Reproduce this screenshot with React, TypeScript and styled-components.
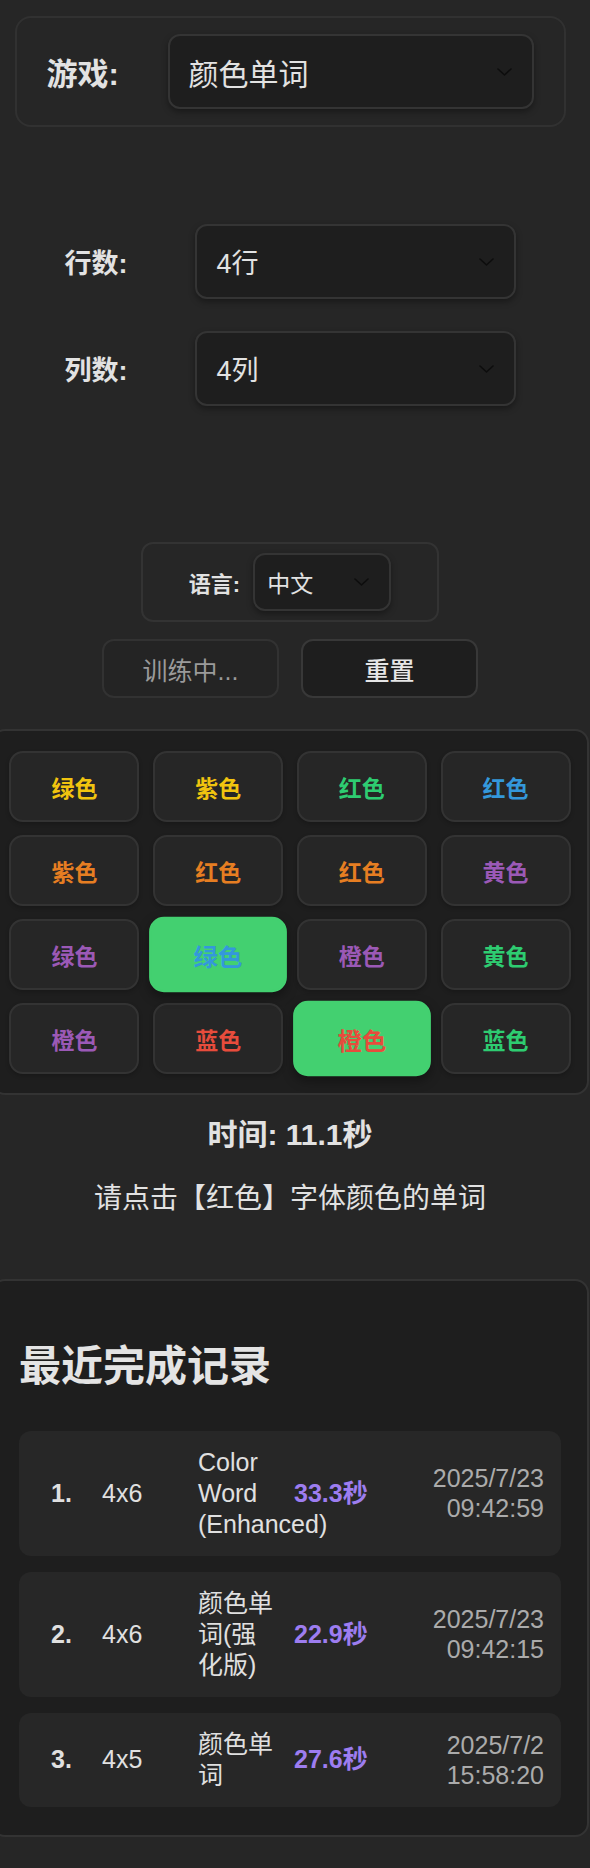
import React from "react";
import styled, { createGlobalStyle } from "styled-components";

const GlobalStyle = createGlobalStyle`
  html, body {
    margin: 0;
    padding: 0;
    background: #262626;
  }
  body {
    font-family: "Liberation Sans", "Noto Sans CJK SC", sans-serif;
    color: #e0e0e0;
    overflow-x: hidden;
  }
  * { box-sizing: border-box; }
`;

const Page = styled.div`
  width: 580px;
  display: flex;
  flex-direction: column;
  align-items: center;
  padding-top: 16px;
  padding-bottom: 31px;
`;

const GameBox = styled.div`
  width: 551px;
  display: flex;
  align-items: center;
  padding: 16px 30px;
  border: 2px solid #313131;
  border-radius: 16px;
`;

const GameLabel = styled.div`
  width: 121px;
  flex: none;
  font-size: 31px;
  font-weight: 700;
  color: #e2e2e2;
`;

const SelectBox = styled.div<{ $h: number; $w?: number; $fs: number; $pl: number; $pr: number }>`
  display: flex;
  align-items: center;
  justify-content: space-between;
  flex: ${(p) => (p.$w ? "none" : "1")};
  width: ${(p) => (p.$w ? `${p.$w}px` : "auto")};
  height: ${(p) => p.$h}px;
  padding: 0 ${(p) => p.$pr}px 0 ${(p) => p.$pl}px;
  background: #1e1e1e;
  border: 2px solid #343434;
  border-radius: 12px;
  box-shadow: 0 3px 6px rgba(0, 0, 0, 0.35);
  font-size: ${(p) => p.$fs}px;
  color: #e2e2e2;
`;

const ChevronSvg = styled.svg`
  flex: none;
  display: block;
`;

const Chevron = () => (
  <ChevronSvg width={15} height={8} viewBox="0 0 15 8">
    <polyline points="1,1 7.5,7 14,1" fill="none" stroke="#0d0d0d" strokeWidth="1.6" strokeLinecap="round" strokeLinejoin="round" />
  </ChevronSvg>
);

const SizeRow = styled.div<{ $mt: number }>`
  width: 451px;
  display: flex;
  align-items: center;
  margin-top: ${(p) => p.$mt}px;
`;

const SizeLabel = styled.div`
  width: 130px;
  flex: none;
  font-size: 27px;
  font-weight: 700;
  color: #e2e2e2;
`;

const LangBox = styled.div`
  width: 298px;
  height: 80px;
  margin-top: 136px;
  display: flex;
  align-items: center;
  justify-content: center;
  gap: 13px;
  border: 2px solid #333;
  border-radius: 12px;
`;

const LangLabel = styled.div`
  font-size: 22px;
  font-weight: 700;
  color: #e2e2e2;
`;

const ButtonRow = styled.div`
  display: flex;
  gap: 22px;
  margin-top: 17px;
`;

const ActionButton = styled.div<{ $muted?: boolean }>`
  width: 177px;
  height: 59px;
  display: flex;
  align-items: center;
  justify-content: center;
  border-radius: 12px;
  border: 2px solid ${(p) => (p.$muted ? "#323232" : "#383838")};
  background: ${(p) => (p.$muted ? "#242424" : "#1e1e1e")};
  color: ${(p) => (p.$muted ? "#9a9a9a" : "#e6e6e6")};
  font-size: 25px;
  font-weight: ${(p) => (p.$muted ? 400 : 500)};
`;

const Panel = styled.div<{ $mt: number; $pad: string }>`
  flex: none;
  margin-top: ${(p) => p.$mt}px;
  width: 598px;
  border: 2px solid #333;
  border-radius: 14px;
  background: #1e1e1e;
  padding: ${(p) => p.$pad};
`;

const WordGrid = styled.div`
  display: grid;
  grid-template-columns: repeat(4, 130px);
  justify-content: center;
  column-gap: 13.7px;
  row-gap: 13px;
`;

const WordCell = styled.div<{ $color: string; $active?: boolean }>`
  height: 71px;
  display: flex;
  align-items: center;
  justify-content: center;
  border-radius: 14px;
  border: 2px solid ${(p) => (p.$active ? "#43d070" : "#333")};
  background: ${(p) => (p.$active ? "#43d070" : "#262626")};
  color: ${(p) => p.$color};
  font-size: 23px;
  font-weight: 700;
  transform: ${(p) => (p.$active ? "scale(1.06)" : "none")};
  box-shadow: ${(p) => (p.$active ? "0 4px 10px rgba(0,0,0,0.35)" : "0 2px 4px rgba(0,0,0,0.2)")};
`;

const TimeText = styled.div`
  margin-top: 20px;
  font-size: 30px;
  font-weight: 700;
  line-height: 1.3;
  color: #e2e2e2;
`;

const Instruction = styled.div`
  margin-top: 27px;
  font-size: 28px;
  line-height: 1.3;
  color: #e2e2e2;
`;

const HistoryTitle = styled.h2`
  margin: 0 0 38px 0;
  font-size: 42px;
  font-weight: 700;
  line-height: 1.2;
  color: #e4e4e4;
`;

const RecordList = styled.div`
  display: flex;
  flex-direction: column;
  gap: 16px;
`;

const RecordCard = styled.div`
  display: grid;
  grid-template-columns: 51px 96px 96px 1fr auto;
  align-items: center;
  padding: 16px 17px 16px 32px;
  background: #272727;
  border-radius: 12px;
  font-size: 25px;
  line-height: 31px;
  color: #e0e0e0;
`;

const Rank = styled.div`
  font-weight: 700;
`;

const NameCell = styled.div`
  padding-right: 18px;
`;

const Duration = styled.div`
  font-weight: 700;
  color: #9d7df0;
`;

const DateCell = styled.div`
  max-width: 122px;
  text-align: right;
  color: #ababab;
  line-height: 30px;
`;

const Y = "#f1c40f";
const G = "#2ecc71";
const B = "#3498db";
const O = "#e67e22";
const P = "#9b59b6";
const R = "#e74c3c";

const cells: { t: string; c: string; a?: boolean }[] = [
  { t: "绿色", c: Y },
  { t: "紫色", c: Y },
  { t: "红色", c: G },
  { t: "红色", c: B },
  { t: "紫色", c: O },
  { t: "红色", c: O },
  { t: "红色", c: O },
  { t: "黄色", c: P },
  { t: "绿色", c: P },
  { t: "绿色", c: B, a: true },
  { t: "橙色", c: P },
  { t: "黄色", c: G },
  { t: "橙色", c: P },
  { t: "蓝色", c: R },
  { t: "橙色", c: R, a: true },
  { t: "蓝色", c: G },
];

const records = [
  { rank: "1.", size: "4x6", name: "Color Word (Enhanced)", time: "33.3秒", date: "2025/7/23 09:42:59" },
  { rank: "2.", size: "4x6", name: "颜色单词(强化版)", time: "22.9秒", date: "2025/7/23 09:42:15" },
  { rank: "3.", size: "4x5", name: "颜色单词", time: "27.6秒", date: "2025/7/2 15:58:20" },
];

export default function App() {
  return (
    <>
      <GlobalStyle />
      <Page>
        <GameBox>
          <GameLabel>游戏:</GameLabel>
          <SelectBox $h={75} $fs={30} $pl={19} $pr={20}>
            <span>颜色单词</span>
            <Chevron />
          </SelectBox>
        </GameBox>
        <SizeRow $mt={97}>
          <SizeLabel>行数:</SizeLabel>
          <SelectBox $h={75} $w={321} $fs={27} $pl={20} $pr={20}>
            <span>4行</span>
            <Chevron />
          </SelectBox>
        </SizeRow>
        <SizeRow $mt={32}>
          <SizeLabel>列数:</SizeLabel>
          <SelectBox $h={75} $w={321} $fs={27} $pl={20} $pr={20}>
            <span>4列</span>
            <Chevron />
          </SelectBox>
        </SizeRow>

        <LangBox>
          <LangLabel>语言:</LangLabel>
          <SelectBox $h={58} $w={138} $fs={23} $pl={12} $pr={20}>
            <span>中文</span>
            <Chevron />
          </SelectBox>
        </LangBox>
        <ButtonRow>
          <ActionButton $muted>训练中...</ActionButton>
          <ActionButton>重置</ActionButton>
        </ButtonRow>

        <Panel $mt={31} $pad="20px 0 19px 0">
          <WordGrid>
            {cells.map((c, i) => (
              <WordCell key={i} $color={c.c} $active={c.a}>
                {c.t}
              </WordCell>
            ))}
          </WordGrid>
        </Panel>

        <TimeText>时间: 11.1秒</TimeText>
        <Instruction>请点击【红色】字体颜色的单词</Instruction>

        <Panel $mt={62} $pad="61px 26px 28px 26px">
          <HistoryTitle>最近完成记录</HistoryTitle>
          <RecordList>
            {records.map((r) => (
              <RecordCard key={r.rank}>
                <Rank>{r.rank}</Rank>
                <div>{r.size}</div>
                <NameCell>{r.name}</NameCell>
                <Duration>{r.time}</Duration>
                <DateCell>{r.date}</DateCell>
              </RecordCard>
            ))}
          </RecordList>
        </Panel>
      </Page>
    </>
  );
}
